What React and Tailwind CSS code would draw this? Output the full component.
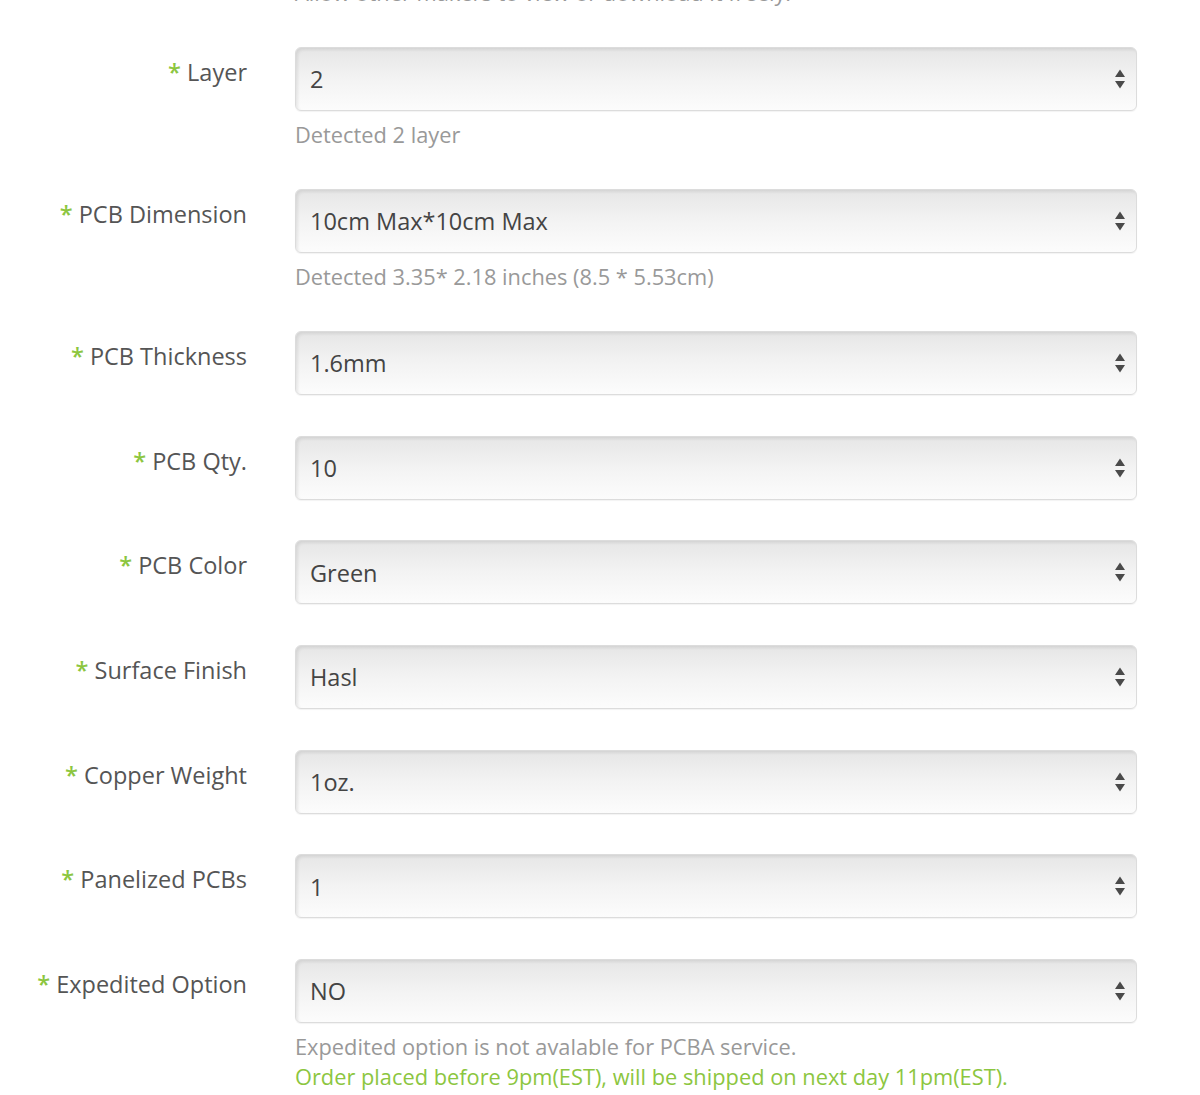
import React from 'react';

const rows = [
  { label: 'Layer', value: '2', help: ['Detected 2 layer'] },
  { label: 'PCB Dimension', value: '10cm Max*10cm Max', help: ['Detected 3.35* 2.18 inches (8.5 * 5.53cm)'] },
  { label: 'PCB Thickness', value: '1.6mm' },
  { label: 'PCB Qty.', value: '10' },
  { label: 'PCB Color', value: 'Green' },
  { label: 'Surface Finish', value: 'Hasl' },
  { label: 'Copper Weight', value: '1oz.' },
  { label: 'Panelized PCBs', value: '1' },
  {
    label: 'Expedited Option',
    value: 'NO',
    help: ['Expedited option is not avalable for PCBA service.'],
    note: 'Order placed before 9pm(EST), will be shipped on next day 11pm(EST).',
  },
];

const Arrows = () => (
  <svg width="12" height="26" viewBox="0 0 12 26" className="shrink-0">
    <path d="M6 3.5 L11 11 L1 11 Z" fill="#4a4a4a" />
    <path d="M6 22.5 L11 15 L1 15 Z" fill="#4a4a4a" />
  </svg>
);

const Row = ({ row, last }) => (
  <div className={`flex ${last ? '' : row.help ? 'mb-[39px]' : 'mb-[40.67px]'}`}>
    <div className="w-[247px] shrink-0 text-right pt-[9px] text-[23.5px] leading-[32px] text-[#555] whitespace-nowrap">
      <span className="text-[#8cc63f] font-semibold">*</span> {row.label}
    </div>
    <div className="ml-[48px] w-[842px] shrink-0">
      <div className="h-[64px] flex items-center justify-between pl-[14px] pr-[10px] rounded-[6px] border border-[#dcdcdc] bg-gradient-to-b from-[#e6e6e6] via-[#f3f3f3] to-[#fcfcfc] shadow-[inset_2px_2px_3px_rgba(0,0,0,0.08),0_1px_1px_rgba(0,0,0,0.05)] text-[23.5px] text-[#444]">
        <span className="pt-[2px]">{row.value}</span>
        <Arrows />
      </div>
      {row.help && (
        <div className="mt-[9px] text-[21.8px] leading-[30px] whitespace-nowrap">
          {row.help.map((h) => (
            <div key={h} className="text-[#999]">{h}</div>
          ))}
          {row.note && <div className="text-[#8cc63f]">{row.note}</div>}
        </div>
      )}
    </div>
  </div>
);

export default function App() {
  return (
    <div className="w-[1200px] h-[1095px] overflow-hidden bg-white" style={{ fontFamily: '"Open Sans", sans-serif' }}>
      <div className="-mt-[22px] ml-[295px] h-[30px] text-[21.8px] leading-[30px] text-[#999] whitespace-nowrap">
        Allow other makers to view or download it freely.
      </div>
      <div className="mt-[39px]">
        {rows.map((r, i) => (
          <Row key={r.label} row={r} last={i === rows.length - 1} />
        ))}
      </div>
    </div>
  );
}
